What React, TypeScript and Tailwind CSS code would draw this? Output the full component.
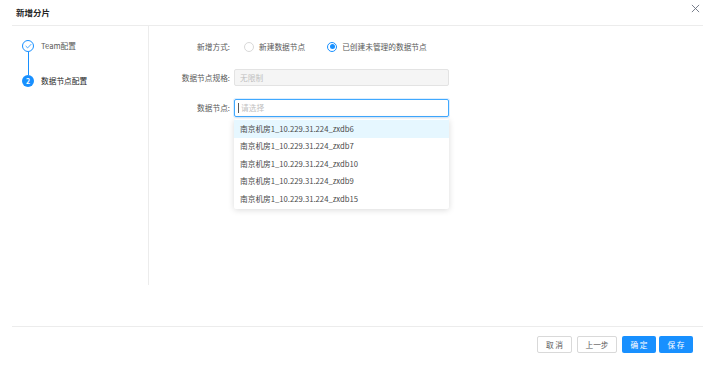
import React from 'react';

const font = { fontFamily: '"Noto Sans CJK SC", "Liberation Sans", sans-serif' };

const options = [
  '南京机房1_10.229.31.224_zxdb6',
  '南京机房1_10.229.31.224_zxdb7',
  '南京机房1_10.229.31.224_zxdb10',
  '南京机房1_10.229.31.224_zxdb9',
  '南京机房1_10.229.31.224_zxdb15',
];

const Radio = ({ checked, label }: { checked?: boolean; label: string }) => (
  <label className="flex items-center gap-[5px]">
    <span
      className={`flex h-[10px] w-[10px] items-center justify-center rounded-full border ${
        checked ? 'border-[#1890ff]' : 'border-[#d9d9d9]'
      }`}
    >
      {checked && <span className="h-[5px] w-[5px] rounded-full bg-[#1890ff]" />}
    </span>
    <span className="text-[#595959]">{label}</span>
  </label>
);

export default function App() {
  return (
    <div className="flex h-[365px] w-[725px] flex-col bg-white text-[7.7px] text-[#595959]" style={font}>
      {/* header */}
      <div className="ml-[12px] mr-[22px] flex h-[26px] items-center justify-between border-b border-[#ececec] pl-[4px]">
        <span className="text-[8.5px] font-bold text-[#262626]">新增分片</span>
        <svg width="9" height="9" viewBox="0 0 10 10" className="mr-[3px] mb-[9px]">
          <path d="M1 1 L9 9 M9 1 L1 9" stroke="#6b7280" strokeWidth="1" />
        </svg>
      </div>

      <div className="flex flex-1">
        {/* steps */}
        <div className="ml-[12px] h-[259px] w-[137px] border-r border-[#ececec] pt-[14px]">
          <div className="flex items-center gap-[7px] pl-[10px]">
            <span className="flex h-[12px] w-[12px] items-center justify-center rounded-full border border-[#1890ff]">
              <svg width="7" height="6" viewBox="0 0 8 6">
                <path d="M0.8 3 L3 5.2 L7.2 0.8" stroke="#1890ff" strokeWidth="0.9" fill="none" />
              </svg>
            </span>
            <span>Team配置</span>
          </div>
          <div className="ml-[15.5px] h-[23px] w-px bg-[#1890ff]" />
          <div className="flex items-center gap-[7px] pl-[10px]">
            <span className="flex h-[12px] w-[12px] items-center justify-center rounded-full bg-[#1890ff] text-[7px] font-bold text-white">
              2
            </span>
            <span className="text-[#262626]">数据节点配置</span>
          </div>
        </div>

        {/* form */}
        <div className="flex flex-col pt-[14px]">
          <div className="flex h-[14px] items-center">
            <span className="w-[81px] text-right">新增方式:</span>
            <div className="ml-[14px] flex gap-[22px]">
              <Radio label="新建数据节点" />
              <Radio checked label="已创建未管理的数据节点" />
            </div>
          </div>
          <div className="mt-[15px] flex items-center">
            <span className="w-[81px] text-right">数据节点规格:</span>
            <div className="ml-[4px] flex h-[17px] w-[215px] items-center rounded-[2px] border border-[#e3e3e3] bg-[#f5f5f5] px-[5px] text-[#bfbfbf]">
              无限制
            </div>
          </div>
          <div className="relative mt-[13px] flex items-center">
            <span className="w-[81px] text-right">数据节点:</span>
            <div className="ml-[4px] flex h-[18px] w-[215px] items-center rounded-[2px] border border-[#40a9ff] px-[3px] text-[#bfbfbf] shadow-[0_0_0_1px_rgba(24,144,255,0.15)]">
              <span className="mr-[2px] h-[10px] w-px bg-[#595959]" />
              请选择
            </div>
            <div className="absolute left-[85px] top-[20px] w-[215px] rounded-[2px] bg-white py-[1px] text-[#4a4a4a] shadow-[0_1px_6px_rgba(0,0,0,0.15)]">
              {options.map((o, i) => (
                <div
                  key={o}
                  className={`flex h-[17.5px] items-center px-[6px] ${i === 0 ? 'bg-[#e6f7ff]' : ''}`}
                >
                  {o}
                </div>
              ))}
            </div>
          </div>
        </div>
      </div>

      {/* footer */}
      <div className="ml-[12px] mr-[22px] flex h-[39px] items-start justify-end gap-[5px] border-t border-[#ececec] pt-[9px] pr-[10px]">
        <button className="h-[17px] w-[35px] rounded-[2px] border border-[#d9d9d9] bg-white text-[#595959]">取 消</button>
        <button className="h-[17px] w-[40px] rounded-[2px] border border-[#d9d9d9] bg-white text-[#595959]">上一步</button>
        <button className="h-[17px] w-[34px] rounded-[2px] bg-[#1890ff] text-white">确 定</button>
        <button className="-ml-[2px] h-[17px] w-[34px] rounded-[2px] bg-[#1890ff] text-white">保 存</button>
      </div>
    </div>
  );
}
